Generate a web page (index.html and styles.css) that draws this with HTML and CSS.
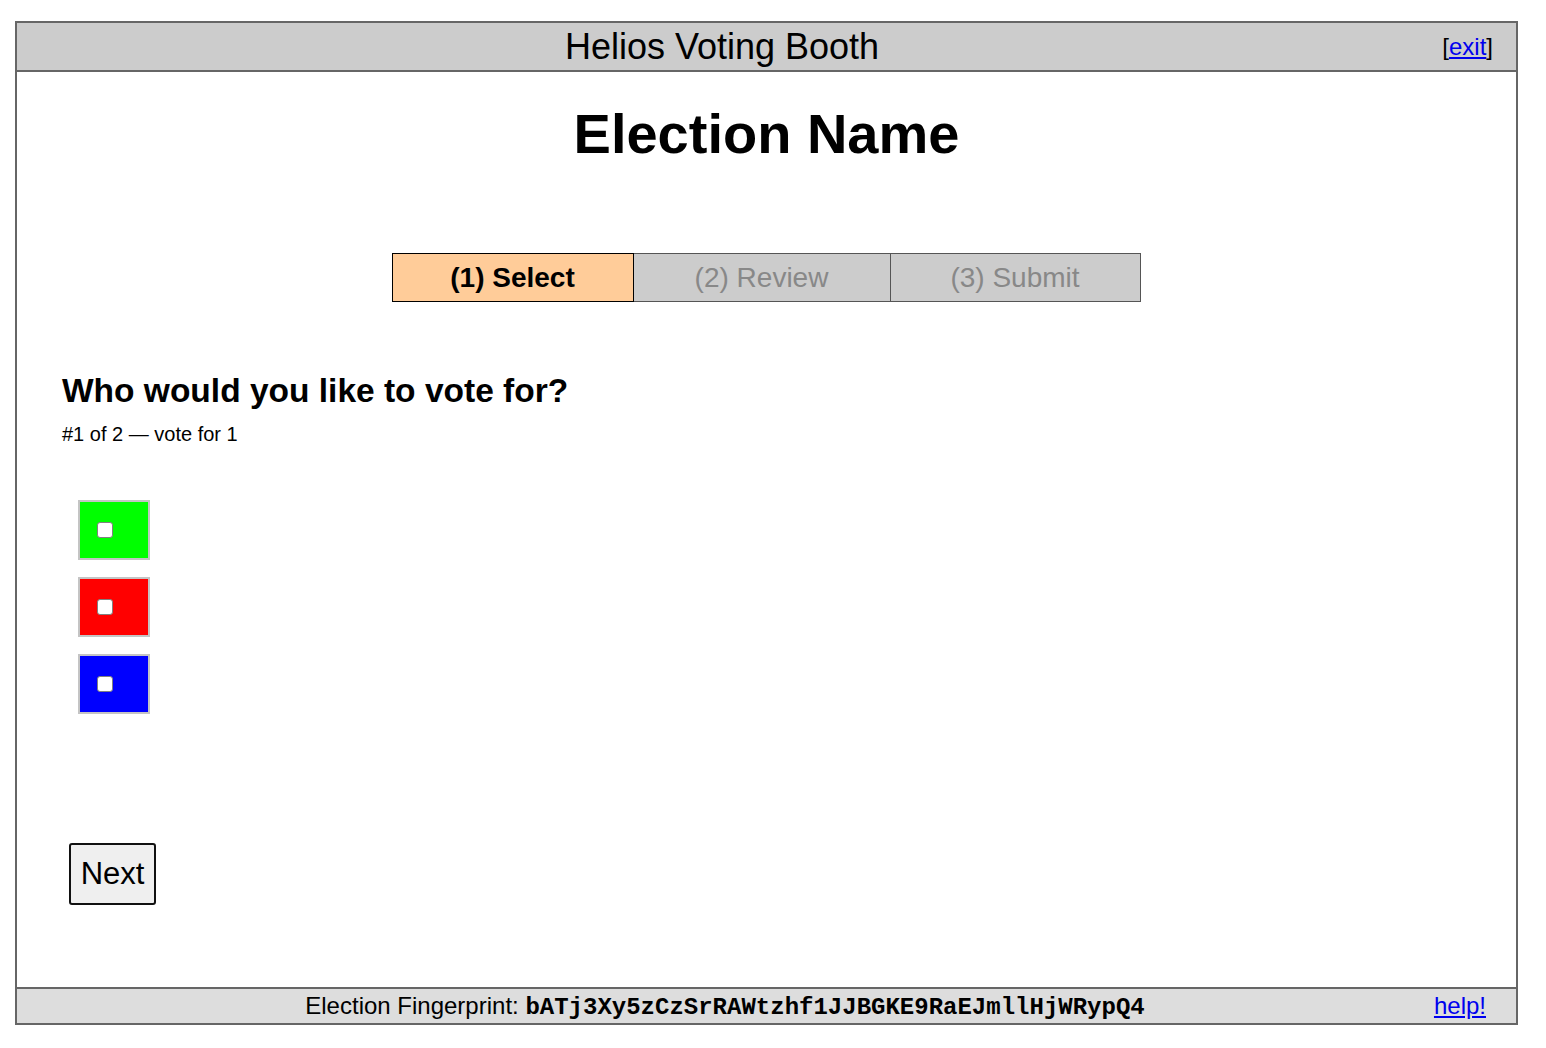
FILE: index.html
```html
<!DOCTYPE html>
<html>
<head>
<meta charset="utf-8">
<title>Helios Voting Booth</title>
<link rel="stylesheet" href="styles.css">
</head>
<body>
<div class="booth">
  <div class="header">
    <div class="header-title">Helios Voting Booth</div>
    <div class="header-exit">[<a href="#">exit</a>]</div>
  </div>
  <div class="content">
    <h1 class="election-name">Election Name</h1>
    <div class="progress">
      <div class="step step-active">(1) Select</div>
      <div class="step">(2) Review</div>
      <div class="step">(3) Submit</div>
    </div>
    <h2 class="question">Who would you like to vote for?</h2>
    <div class="question-meta">#1 of 2 — vote for 1</div>
    <div class="answers">
      <label class="answer answer-green"><input type="checkbox"></label>
      <label class="answer answer-red"><input type="checkbox"></label>
      <label class="answer answer-blue"><input type="checkbox"></label>
    </div>
    <button class="next-btn" type="button">Next</button>
  </div>
  <div class="footer">
    <div class="footer-text">Election Fingerprint: <span class="fingerprint">bATj3Xy5zCzSrRAWtzhf1JJBGKE9RaEJmllHjWRypQ4</span></div>
    <div class="footer-help"><a href="#">help!</a></div>
  </div>
</div>
</body>
</html>
```
FILE: styles.css
```css
html, body {
  margin: 0;
  padding: 0;
  background: #fff;
}

body {
  font-family: "Liberation Sans", Arial, sans-serif;
  color: #000;
}

a {
  color: #0000ee;
  text-decoration: underline;
}

.booth {
  margin: 21px 28px 0 15px;
  border: 2px solid #666;
}

.header {
  display: flex;
  align-items: center;
  height: 47px;
  background: #ccc;
  border-bottom: 2px solid #666;
}

.header-title {
  flex: 1;
  text-align: center;
  font-size: 36px;
}

.header-exit {
  width: 89px;
  box-sizing: border-box;
  padding-right: 23px;
  text-align: right;
  font-size: 24px;
}

.content {
  padding: 30px 0 82px 45px;
}

.election-name {
  margin: 0 45px 0 0;
  text-align: center;
  font-size: 56px;
  font-weight: bold;
  line-height: 64px;
}

.progress {
  display: grid;
  grid-template-columns: 242px 257px 250px;
  width: 749px;
  margin: 87px auto 0;
  position: relative;
  left: -23px;
}

.step {
  height: 47px;
  display: flex;
  align-items: center;
  justify-content: center;
  font-size: 28px;
  background: #ccc;
  color: #888;
  border: 1px solid #555;
  border-left: none;
}

.step-active {
  background: #ffcc99;
  color: #000;
  font-weight: bold;
  border: 1px solid #000;
}

.question {
  margin: 70px 0 0;
  font-size: 33.5px;
  font-weight: bold;
  line-height: 38px;
}

.question-meta {
  margin-top: 13px;
  font-size: 20px;
  line-height: 23px;
}

.answers {
  display: flex;
  flex-direction: column;
  gap: 17px;
  margin: 54px 0 0 16px;
}

.answer {
  display: flex;
  align-items: center;
  width: 72px;
  height: 60px;
  box-sizing: border-box;
  border: 2px solid #c4c4c4;
  padding-left: 17px;
}

.answer input {
  appearance: none;
  -webkit-appearance: none;
  box-sizing: border-box;
  width: 16px;
  height: 16px;
  margin: 0;
  background: #fff;
  border: 1.5px solid #808080;
  border-radius: 3px;
}

.answer-green { background: #00ff00; }
.answer-red { background: #ff0000; }
.answer-blue { background: #0000ff; }

.next-btn {
  display: block;
  margin: 129px 0 0 7px;
  width: 87px;
  height: 62px;
  padding: 0;
  background: #efefef;
  border: 2px solid #111;
  border-radius: 3px;
  font-family: "Liberation Sans", Arial, sans-serif;
  font-size: 31px;
  color: #000;
}

.footer {
  display: flex;
  align-items: center;
  height: 34px;
  background: #ddd;
  border-top: 2px solid #666;
}

.footer-text {
  flex: 1;
  text-align: center;
  font-size: 24px;
}

.fingerprint {
  font-family: "Liberation Mono", "Courier New", monospace;
  font-weight: bold;
}

.footer-help {
  width: 83px;
  box-sizing: border-box;
  padding-right: 30px;
  text-align: right;
  font-size: 24px;
}
```
